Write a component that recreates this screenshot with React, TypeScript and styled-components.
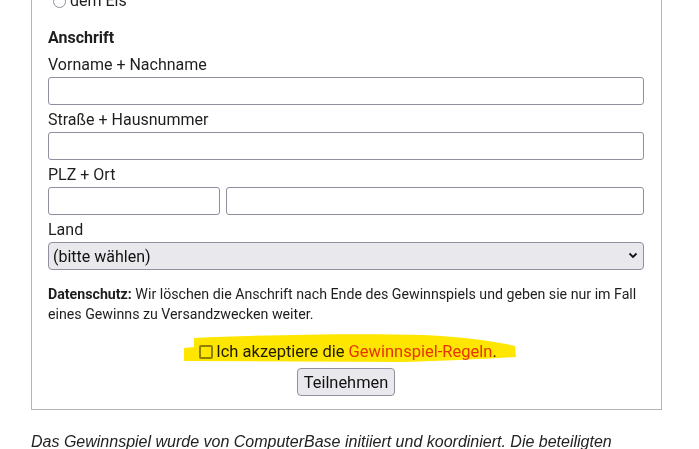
import { FC } from 'react';
import styled, { createGlobalStyle } from 'styled-components';

const GlobalStyle = createGlobalStyle`
  html, body {
    margin: 0;
    padding: 0;
    background: #fff;
    overflow: hidden;
  }

  body {
    font-family: Roboto, "Noto Sans", sans-serif;
    color: #1e1e1e;
  }
`;

const Page = styled.div`
  width: 631px;
  margin: -11px 0 0 31px;
`;

const FormBox = styled.div`
  border: 1px solid #b5b5b5;
  border-top: none;
  padding: 0 17px 13px 16px;
`;

const RadioRow = styled.label`
  display: flex;
  align-items: center;
  gap: 4px;
  padding-left: 5px;
  font-size: 16px;
  line-height: 24px;
`;

const Radio = styled.span`
  width: 11px;
  height: 11px;
  border: 1px solid #8f8f9d;
  border-radius: 50%;
`;

const SectionTitle = styled.div`
  margin-top: 13px;
  font-size: 16px;
  line-height: 24px;
  font-weight: 700;
`;

const FieldLabel = styled.label`
  display: block;
  margin-top: 3px;
  font-size: 16px;
  line-height: 24px;
`;

const TextInput = styled.input`
  display: block;
  box-sizing: border-box;
  width: 100%;
  height: 28px;
  margin: 0;
  border: 1px solid #8f8f9d;
  border-radius: 3px;
  background: #fff;
`;

const PlzRow = styled.div`
  display: grid;
  grid-template-columns: 172px 1fr;
  gap: 6px;
`;

const SelectWrap = styled.div`
  position: relative;
`;

const Select = styled.select`
  display: block;
  box-sizing: border-box;
  width: 100%;
  height: 28px;
  margin: 0;
  padding: 0 24px 0 4px;
  appearance: none;
  border: 1px solid #8f8f9d;
  border-radius: 4px;
  background: #e9e9ed;
  color: #111;
  font-family: Roboto, "Noto Sans", sans-serif;
  font-size: 16px;
`;

const Chevron = styled.svg`
  position: absolute;
  right: 6px;
  top: 10px;
  pointer-events: none;
`;

const Privacy = styled.p`
  margin: 14px 0 0;
  font-size: 14.2px;
  line-height: 20px;

  strong {
    font-weight: 700;
  }
`;

const AcceptRow = styled.div`
  position: relative;
  display: flex;
  justify-content: center;
  margin-top: 16px;
`;

const AcceptLabel = styled.label`
  display: inline-flex;
  align-items: center;
  gap: 3px;
  font-size: 16.5px;
  line-height: 24px;
  margin-left: 4px;
`;

const Checkbox = styled.span`
  flex: none;
  width: 10px;
  height: 10px;
  border: 2px solid #8f8f9d;
  border-radius: 2px;
  background: #fff;
`;

const RulesLink = styled.a`
  color: #e53a1b;
  text-decoration: none;
`;

const Highlight = styled.svg`
  position: absolute;
  left: 136px;
  top: -6px;
  mix-blend-mode: multiply;
  pointer-events: none;
`;

const ButtonRow = styled.div`
  display: flex;
  justify-content: center;
  margin-top: 4px;
`;

const SubmitButton = styled.button`
  box-sizing: border-box;
  height: 28px;
  padding: 0 6px;
  border: 1px solid #8f8f9d;
  border-radius: 4px;
  background: #e9e9ed;
  color: #111;
  font-family: Roboto, "Noto Sans", sans-serif;
  font-size: 16.4px;
`;

const Note = styled.p`
  margin: 20px 0 0;
  font-family: "Liberation Sans", Arial, sans-serif;
  font-style: italic;
  font-size: 16px;
  line-height: 24px;
  color: #222;
`;

const App: FC = () => (
  <>
    <GlobalStyle />
    <Page>
      <FormBox>
        <RadioRow>
          <Radio />
          dem Eis
        </RadioRow>

        <SectionTitle>Anschrift</SectionTitle>

        <FieldLabel>Vorname + Nachname</FieldLabel>
        <TextInput type="text" />

        <FieldLabel>Straße + Hausnummer</FieldLabel>
        <TextInput type="text" />

        <FieldLabel>PLZ + Ort</FieldLabel>
        <PlzRow>
          <TextInput type="text" />
          <TextInput type="text" />
        </PlzRow>

        <FieldLabel>Land</FieldLabel>
        <SelectWrap>
          <Select defaultValue="">
            <option value="">(bitte wählen)</option>
          </Select>
          <Chevron width="10" height="7" viewBox="0 0 10 7">
            <path d="M1.5 1.5 5 5l3.5-3.5" fill="none" stroke="#111" strokeWidth="1.8" />
          </Chevron>
        </SelectWrap>

        <Privacy>
          <strong>Datenschutz:</strong> Wir löschen die Anschrift nach Ende des
          Gewinnspiels und geben sie nur im Fall eines Gewinns zu Versandzwecken
          weiter.
        </Privacy>

        <AcceptRow>
          <AcceptLabel>
            <Checkbox />
            <span>
              Ich akzeptiere die <RulesLink href="#">Gewinnspiel-Regeln</RulesLink>.
            </span>
          </AcceptLabel>
          <Highlight width="340" height="34" viewBox="0 0 340 34">
            <path
              d="M0 14 L10 13 L10 4 C80 1 170 -1 240 1 C280 3 310 7 331 12 L332 23 C300 25 260 27 220 28 L0 27 Z"
              fill="#ffe600"
            />
          </Highlight>
        </AcceptRow>

        <ButtonRow>
          <SubmitButton type="button">Teilnehmen</SubmitButton>
        </ButtonRow>
      </FormBox>

      <Note>
        Das Gewinnspiel wurde von ComputerBase initiiert und koordiniert. Die
        beteiligten Partner
      </Note>
    </Page>
  </>
);

export default App;
